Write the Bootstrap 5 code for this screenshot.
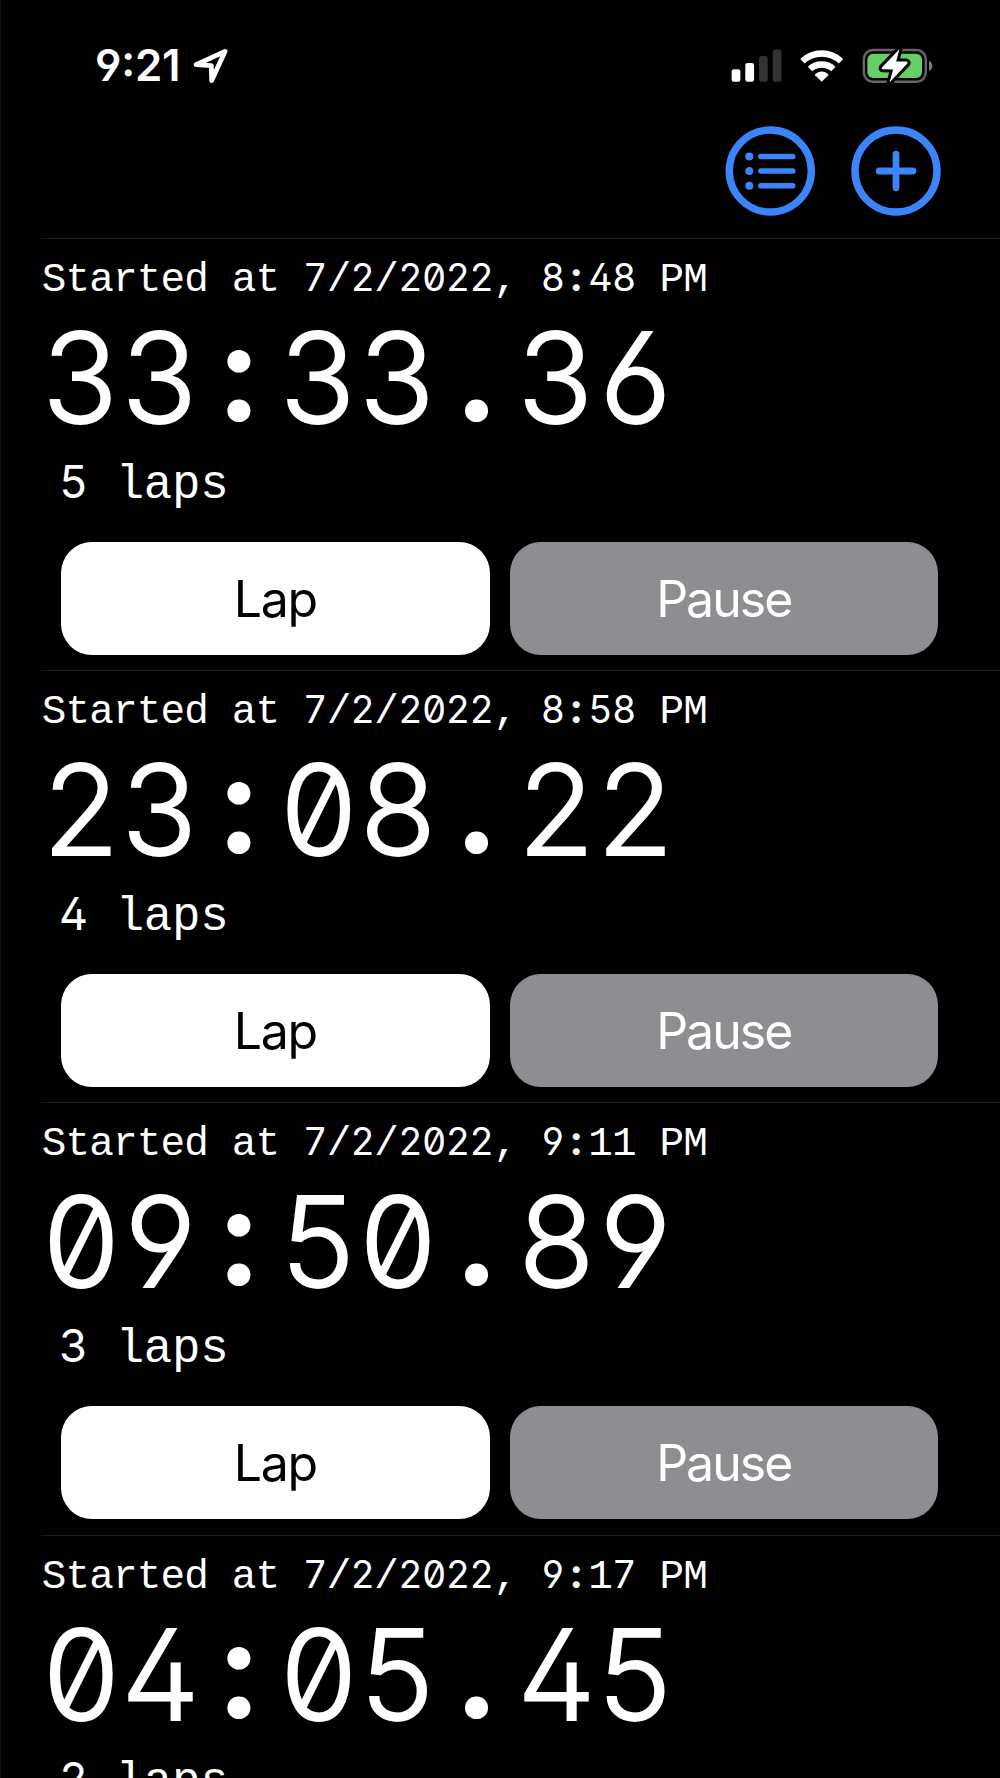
<!DOCTYPE html>
<html lang="en" data-bs-theme="dark">
<head>
<meta charset="utf-8">
<meta name="viewport" content="width=device-width, initial-scale=1">
<title>Stopwatches</title>
<link href="https://cdn.jsdelivr.net/npm/bootstrap@5.3.0/dist/css/bootstrap.min.css" rel="stylesheet">
<style>
  body { background: #000; color: #fff; font-family: Inter, "Liberation Sans", sans-serif; }
  .phone { width: 1000px; height: 1778px; box-shadow: inset 1px 0 #101010; }
  .status-bar { height: 118px; padding: 14px 67px 0 95px; }
  .clock { font-size: 43.8px; font-weight: 600; line-height: 104px; width: 98px; letter-spacing: -.2px; font-feature-settings: "case", "cv04"; }
  .toolbar { height: 119.5px; padding: 8px 59px 0 0; gap: 36px; }
  .tool { width: 90px; height: 90px; color: #3b84f9; line-height: 0; }
  .watch { height: 432.4px; margin-left: 41px; border-top: 1.5px solid #1b1b1c; }
  .started, .elapsed, .laps { font-feature-settings: "tnum", "zero", "cv02", "cv03", "cv04", "calt" 0; white-space: pre; }
  .started { font-size: 37.6px; line-height: 77px; height: 76px; margin-left: .7px; }
  .elapsed { font-size: 124.5px; font-weight: 300; line-height: 125px; height: 125px; }
  .elapsed .n { -webkit-text-stroke: 1.8px #fff; }
  .laps { font-size: 45px; line-height: 83px; height: 83px; margin-left: 18px; }
  .m { font-family: "Liberation Mono", monospace; line-height: 0; }
  .started .m { font-size: 41px; letter-spacing: -.84px; }
  .laps .m { font-size: 47.4px; letter-spacing: -.2px; }
  .n, .s { display: inline-block; text-align: center; line-height: 0; }
  .started .n, .started .s { width: 23.76px; }
  .elapsed .n, .elapsed .s { width: 79.2px; }
  .laps .n { width: 28.4px; }
  .s { font-family: Lato, sans-serif; font-weight: 900; }
  .elapsed .s { font-size: 141px; vertical-align: 2px; }
  .started .s { font-size: 42px; }
  .actions { margin: 19px 62px 0 20px; gap: 20px; }
  .actions .btn { flex: 1 1 0; height: 113px; border: 0; border-radius: 31px; padding: 2px 0 0; font-size: 50px; line-height: 111px; letter-spacing: -1.4px; }
  .btn-lap, .btn-lap:hover { background: #fff; color: #000; }
  .actions .btn-pause, .btn-pause:hover { background: #8e8d92; color: #fff; letter-spacing: -2px; }
</style>
</head>
<body>
<div class="phone overflow-hidden">
  <div class="status-bar d-flex align-items-start">
    <div class="clock">9:21</div>
    <svg width="36" height="36" viewBox="193 48 36 36" style="margin-top:34px"><path d="M225 51.4 196.2 64.7 211.3 65.6 211.7 80.6Z" fill="none" stroke="#fff" stroke-width="4.8" stroke-linejoin="round"/></svg>
    <svg class="ms-auto" width="202" height="40" viewBox="731 46 202 40" style="margin-top:32px" aria-hidden="true">
      <g fill="#fff"><rect x="731.6" y="69.2" width="8.8" height="12.6" rx="2.4"/><rect x="745.3" y="63" width="8.8" height="18.8" rx="2.4"/></g>
      <g fill="#333"><rect x="759" y="56" width="8.7" height="25.8" rx="2.4"/><rect x="772.7" y="49.5" width="8.7" height="32.3" rx="2.4"/></g>
      <g fill="none" stroke="#fff" stroke-width="6.4"><path d="M802.4 61.2A28 28 0 0 1 841 61.2"/><path d="M810 69A17.3 17.3 0 0 1 833.4 69"/></g>
      <path d="M821.7 81.8 815.1 75.2Q814.8 74.4 815.6 73.8 821.7 69.4 827.8 73.8 828.6 74.4 828.3 75.2Z" fill="#fff"/>
      <rect x="863.8" y="50" width="62" height="31.8" rx="9.2" fill="none" stroke="#666" stroke-width="2.4"/>
      <rect x="867.4" y="53.7" width="54.6" height="24.2" rx="5.8" fill="#65cf66"/>
      <path d="M929 60.8Q932.4 62.5 932.4 65.9T929 71Z" fill="#777"/>
      <path d="M899.4 49.2 881.9 67.4Q881.1 69 882.8 69.3L893.1 69.4 889.5 82.6 907.4 63.6Q908.2 61.9 906.4 61.6L896.2 61.5Z" fill="#fff" stroke="#000" stroke-width="6" stroke-linejoin="round" paint-order="stroke"/>
    </svg>
  </div>
  <div class="toolbar d-flex justify-content-end">
    <a class="tool" href="#" aria-label="List"><svg width="90" height="90" viewBox="0 0 90 90" fill="none" stroke="currentColor" stroke-linecap="round"><circle cx="45.3" cy="45" r="41" stroke-width="7.4"/><path d="M35.8 30.5h32M35.8 45h32M35.8 59.7h32" stroke-width="5.4"/><g fill="currentColor" stroke="none"><circle cx="24.3" cy="30.5" r="4"/><circle cx="24.3" cy="45" r="4"/><circle cx="24.3" cy="59.7" r="4"/></g></svg></a>
    <a class="tool" href="#" aria-label="Add"><svg width="90" height="90" viewBox="0 0 90 90" fill="none" stroke="currentColor" stroke-linecap="round"><circle cx="45" cy="45" r="41" stroke-width="7.4"/><path d="M28.3 45h33.6M45 28.2v33.6" stroke-width="6.8"/></svg></a>
  </div>

  <section class="watch">
    <div class="started"><span class="m">Started at </span><span class="n">7</span><span class="m">/</span><span class="n">2</span><span class="m">/</span><span class="n">2</span><span class="n">0</span><span class="n">2</span><span class="n">2</span><span class="m">, </span><span class="n">8</span><span class="s">:</span><span class="n">4</span><span class="n">8</span><span class="m"> PM</span></div>
    <div class="elapsed"><span class="n">3</span><span class="n">3</span><span class="s">:</span><span class="n">3</span><span class="n">3</span><span class="s">.</span><span class="n">3</span><span class="n">6</span></div>
    <div class="laps"><span class="n">5</span><span class="m"> laps</span></div>
    <div class="actions d-flex"><button class="btn btn-lap">Lap</button><button class="btn btn-pause">Pause</button></div>
  </section>
  <section class="watch">
    <div class="started"><span class="m">Started at </span><span class="n">7</span><span class="m">/</span><span class="n">2</span><span class="m">/</span><span class="n">2</span><span class="n">0</span><span class="n">2</span><span class="n">2</span><span class="m">, </span><span class="n">8</span><span class="s">:</span><span class="n">5</span><span class="n">8</span><span class="m"> PM</span></div>
    <div class="elapsed"><span class="n">2</span><span class="n">3</span><span class="s">:</span><span class="n">0</span><span class="n">8</span><span class="s">.</span><span class="n">2</span><span class="n">2</span></div>
    <div class="laps"><span class="n">4</span><span class="m"> laps</span></div>
    <div class="actions d-flex"><button class="btn btn-lap">Lap</button><button class="btn btn-pause">Pause</button></div>
  </section>
  <section class="watch">
    <div class="started"><span class="m">Started at </span><span class="n">7</span><span class="m">/</span><span class="n">2</span><span class="m">/</span><span class="n">2</span><span class="n">0</span><span class="n">2</span><span class="n">2</span><span class="m">, </span><span class="n">9</span><span class="s">:</span><span class="m">11 PM</span></div>
    <div class="elapsed"><span class="n">0</span><span class="n">9</span><span class="s">:</span><span class="n">5</span><span class="n">0</span><span class="s">.</span><span class="n">8</span><span class="n">9</span></div>
    <div class="laps"><span class="n">3</span><span class="m"> laps</span></div>
    <div class="actions d-flex"><button class="btn btn-lap">Lap</button><button class="btn btn-pause">Pause</button></div>
  </section>
  <section class="watch">
    <div class="started"><span class="m">Started at </span><span class="n">7</span><span class="m">/</span><span class="n">2</span><span class="m">/</span><span class="n">2</span><span class="n">0</span><span class="n">2</span><span class="n">2</span><span class="m">, </span><span class="n">9</span><span class="s">:</span><span class="m">1</span><span class="n">7</span><span class="m"> PM</span></div>
    <div class="elapsed"><span class="n">0</span><span class="n">4</span><span class="s">:</span><span class="n">0</span><span class="n">5</span><span class="s">.</span><span class="n">4</span><span class="n">5</span></div>
    <div class="laps"><span class="n">2</span><span class="m"> laps</span></div>
  </section>
</div>
<script src="https://cdn.jsdelivr.net/npm/bootstrap@5.3.0/dist/js/bootstrap.bundle.min.js"></script>
</body>
</html>
